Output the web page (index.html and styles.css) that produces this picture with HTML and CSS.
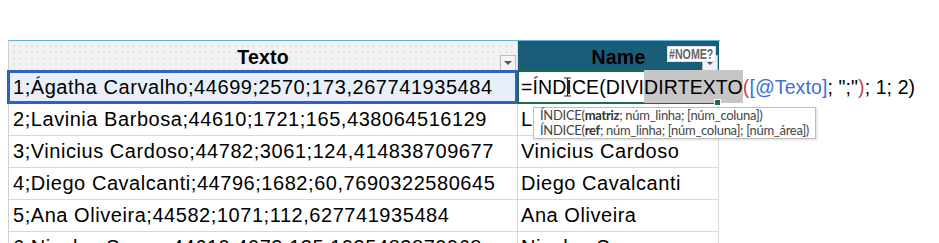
FILE: index.html
```html
<!DOCTYPE html>
<html lang="pt">
<head>
<meta charset="utf-8">
<title>Planilha</title>
<link rel="stylesheet" href="styles.css">
</head>
<body>
<div class="sheet">
  <div class="row head">
    <div class="cell ha"><span class="htext">Texto</span><span class="filter"><span class="tri"></span></span></div>
    <div class="cell hb"><span class="htext">Name</span><span class="filter"><span class="tri"></span></span><span class="badge"><span class="btext">#NOME?</span></span></div>
  </div>
  <div class="row r1">
    <div class="cell a sel">1;Ágatha Carvalho;44699;2570;173,267741935484</div>
    <div class="cell b edit">
      <span class="formula">=ÍNDICE(DIVI<span class="hl">DIRTEXTO</span><span class="red">(</span><span class="blue">[@Texto]</span>; ";"<span class="red">)</span>; 1; 2)</span>
      <svg class="ibeam" width="9" height="20" viewBox="0 0 9 20"><path d="M1 1h7M4.5 1v18M1 19h7" stroke="#222" stroke-width="1.2" fill="none"/></svg>
      <span class="handle"></span>
      <div class="tip">
        <div>ÍNDICE(<b>matriz</b>; núm_linha; [núm_coluna])</div>
        <div>ÍNDICE(<b>ref</b>; núm_linha; [núm_coluna]; [núm_área])</div>
      </div>
    </div>
  </div>
  <div class="row">
    <div class="cell a">2;Lavinia Barbosa;44610;1721;165,438064516129</div>
    <div class="cell b">Lavinia Barbosa</div>
  </div>
  <div class="row">
    <div class="cell a">3;Vinicius Cardoso;44782;3061;124,414838709677</div>
    <div class="cell b">Vinicius Cardoso</div>
  </div>
  <div class="row">
    <div class="cell a">4;Diego Cavalcanti;44796;1682;60,7690322580645</div>
    <div class="cell b">Diego Cavalcanti</div>
  </div>
  <div class="row">
    <div class="cell a">5;Ana Oliveira;44582;1071;112,627741935484</div>
    <div class="cell b">Ana Oliveira</div>
  </div>
  <div class="row">
    <div class="cell a">6;Nicolas Sousa;44610;4073;135,1935483870968</div>
    <div class="cell b">Nicolas Sousa</div>
  </div>
</div>
</body>
</html>
```

FILE: styles.css
```css
html, body {
  margin: 0;
  padding: 0;
  background: #ffffff;
  overflow: hidden;
}
body {
  width: 939px;
  height: 243px;
  font-family: "Liberation Sans", Arial, sans-serif;
  color: #000;
}
.sheet {
  margin: 40px 0 0 8px;
  width: 711px;
  border-left: 1px solid #d0d0d0;
  border-top: 1px solid #5fb3e0;
}
.row {
  display: grid;
  grid-template-columns: 509px 201px;
  height: 32px;
}
.row.head { height: 30px; }
.row.r1 { height: 33px; }
.cell {
  box-sizing: border-box;
  border-bottom: 1px solid #d9d9d9;
  display: flex;
  align-items: center;
  white-space: nowrap;
  font-size: 20px;
  letter-spacing: 0.55px;
  position: relative;
}
.cell.a {
  border-right: 1px solid #d9d9d9;
  padding-left: 4px;
}
.cell.b {
  border-right: 1px solid #d9d9d9;
  padding-left: 3px;
}
.head .cell {
  justify-content: center;
  font-weight: bold;
  font-size: 19.5px;
  letter-spacing: 0.2px;
  border-bottom: none;
}
.ha {
  background-color: #f2f2f2;
  background-image: radial-gradient(circle, #e2e2e2 0.7px, transparent 1px);
  background-size: 6px 6px;
  background-position: 2px 8px;
  border-right: 1px solid #d9d9d9;
}
.hb {
  background: #1a5d79;
}
.htext { position: relative; top: 1px; }
.filter {
  position: absolute;
  right: 1px;
  bottom: 0;
  width: 16px;
  height: 16px;
  box-sizing: border-box;
  background: #f3f3f3;
  border: 1px solid #bdbdbd;
  display: flex;
  align-items: center;
  justify-content: center;
}
.tri {
  width: 0;
  height: 0;
  border-left: 4px solid transparent;
  border-right: 4px solid transparent;
  border-top: 4px solid #5a5560;
}
.badge {
  position: absolute;
  left: 149px;
  top: 5px;
  width: 49px;
  height: 16px;
  box-sizing: border-box;
  background: #ffffff;
  border: 1px solid #e2e2e2;
  display: flex;
  align-items: center;
  justify-content: center;
  overflow: hidden;
}
.btext {
  display: inline-block;
  font-family: "Liberation Sans", Arial, sans-serif;
  font-size: 14px;
  line-height: 14px;
  letter-spacing: 0;
  font-weight: bold;
  color: #666666;
  transform: scaleX(0.76);
  white-space: nowrap;
}
.sel {
  background: #e9eff8;
}
.sel::after {
  content: "";
  position: absolute;
  left: -2px;
  right: -1px;
  top: -1px;
  bottom: -1px;
  border: 3px solid #2d62c2;
  pointer-events: none;
}
.edit {
  background: #ffffff;
  overflow: visible;
  z-index: 2;
}
.edit::after {
  content: "";
  position: absolute;
  left: -1px;
  right: -1px;
  top: -1px;
  bottom: -1px;
  border: 2px solid #1f6b44;
  pointer-events: none;
}
.formula {
  position: relative;
  z-index: 3;
  font-size: 19.5px;
  letter-spacing: 0.1px;
}
.hl {
  background: #c6c6c6;
  padding: 6px 0 5px;
}
.red { color: #c8434e; }
.blue { color: #3a6fd8; }
.ibeam {
  position: absolute;
  left: 45px;
  top: 6px;
  z-index: 4;
}
.handle {
  position: absolute;
  right: -3px;
  bottom: -3px;
  width: 5px;
  height: 5px;
  background: #1f6b44;
  border: 1px solid #fff;
  z-index: 4;
}
.tip {
  position: absolute;
  left: 15px;
  top: 36px;
  width: 283px;
  height: 32px;
  box-sizing: border-box;
  background: #ffffff;
  border: 1px solid #bdbdbd;
  box-shadow: 1px 1px 2px rgba(0,0,0,0.15);
  padding: 0 0 0 6px;
  font-family: Lato, "Open Sans", sans-serif;
  font-size: 13px;
  letter-spacing: -0.3px;
  line-height: 15px;
  color: #444;
  z-index: 5;
}
.tip b { font-weight: bold; color: #333; }
```
